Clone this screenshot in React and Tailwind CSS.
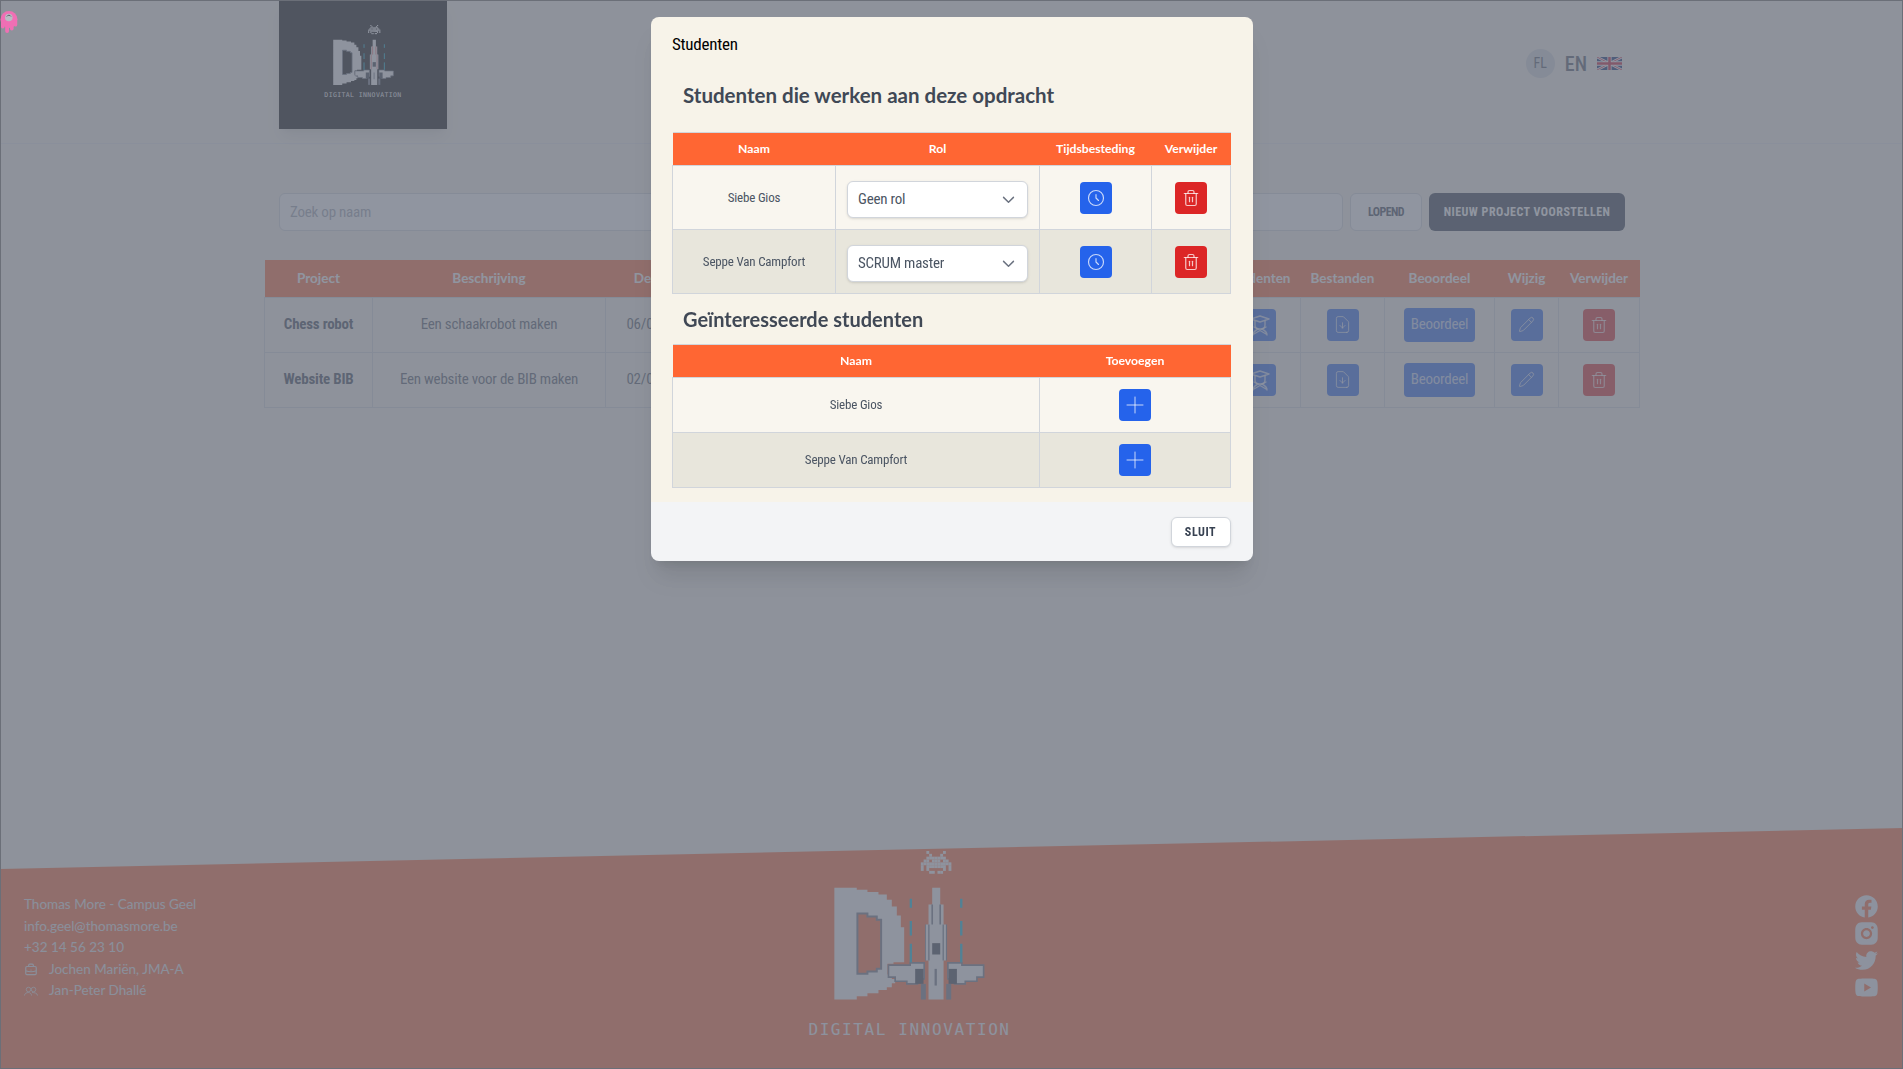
import React from "react";
import { HiOutlineClock, HiOutlinePlus, HiOutlineDocumentDownload, HiOutlineBriefcase, HiOutlineChevronDown } from "react-icons/hi";
import { Pencil, Trash2 } from "lucide-react";
import { RiFacebookCircleFill, RiInstagramFill, RiTwitterFill, RiYoutubeFill } from "react-icons/ri";

const INV = ["..X.....X..", "...X...X...", "..XXXXXXX..", ".XX.XXX.XX.", "XXXXXXXXXXX", "X.XXXXXXX.X", "X.X.....X.X", "...XX.XX..."];

function Wing({ accent }) {
  return (
    <g>
      <path d="M325 404H390V397H432V445H412V460H380V452H345V440H325Z" fill="#f8f8f8" stroke="#6b7280" strokeWidth="5" />
      <rect x="405" y="415" width="25" height="45" fill="#333844" />
      <rect x="422" y="460" width="15" height="47" fill="#6b7280" />
      <path d="M392 205V232M392 272V315M392 340V395" stroke="#00b4d8" strokeWidth="7" fill="none" />
      <path d="M437 282V390" stroke="#6b7280" strokeWidth="5" />
      <path d="M456 222V282" stroke={accent} strokeWidth="5" />
    </g>
  );
}

function Logo({ width, accent, text }) {
  return (
    <div className="flex flex-col items-center" style={{ width }}>
      <svg viewBox="87 62 602 445" className="block w-full">
        {INV.map((row, y) => row.split("").map((c, x) => c === "X" ? <rect key={x + "-" + y} x={422 + x * 8.3} y={62 + y * 8.5} width="8.4" height="8.6" fill="#f8f8f8" /> : null))}
        <path fillRule="evenodd" fill="#f8f8f8" d="M163 172H230V178H262V185H295V192H320V208H335V228H350V255H362V290H372V395H340V400H322V432H335V445H345V458H335V470H320V478H295V488H262V497H230V507H163ZM232 249V430H262V423H290V415H303V268H290V258H262V249Z" />
        <path d="M232 249V430H262V423H290V415H303V268H290V258H262V249Z" fill="none" stroke="#6b7280" strokeWidth="6" />
        <Wing accent={accent} />
        <g transform="matrix(-1 0 0 1 935 0)"><Wing accent={accent} /></g>
        <path d="M456 172H480V222H490V282H497V390H490V507H445V390H437V282H445V222H456Z" fill="#f8f8f8" />
        <path d="M456 222V282M480 222V282" stroke={accent} strokeWidth="5" />
        <path d="M446 282V390M489 282V390" stroke={accent} strokeWidth="4" />
        <rect x="456" y="338" width="24" height="34" fill="#333844" />
        <rect x="463" y="415" width="7" height="50" fill="#6b7280" />
      </svg>
      <div className={"whitespace-nowrap text-center font-['DejaVu_Sans_Mono',monospace] text-[#f1f3f6] " + text}>DIGITAL INNOVATION</div>
    </div>
  );
}

function UKFlag() {
  return (
    <svg viewBox="0 0 60 30" className="h-[13px] w-[25px]" preserveAspectRatio="none">
      <rect width="60" height="30" fill="#012169" />
      <path d="M0 0L60 30M60 0L0 30" stroke="#fff" strokeWidth="6" />
      <path d="M0 0L60 30M60 0L0 30" stroke="#C8102E" strokeWidth="2" />
      <path d="M30 0V30M0 15H60" stroke="#fff" strokeWidth="10" />
      <path d="M30 0V30M0 15H60" stroke="#C8102E" strokeWidth="6" />
    </svg>
  );
}

function CapPerson(props) {
  return (
    <svg viewBox="0 0 24 24" fill="none" stroke="currentColor" strokeWidth="1.3" strokeLinejoin="round" strokeLinecap="round" {...props}>
      <path d="M3 6L12 3L21 6L12 9Z" />
      <path d="M7 8V12C7 15 9.5 16 12 16C14.5 16 17 15 17 12V8" />
      <path d="M5 22C5 19 8 17 10 16M19 22C19 19 16 17 14 16M6 14L18 21M18 14L6 21" />
    </svg>
  );
}

function TwoPeople(props) {
  return (
    <svg viewBox="0 0 28 20" fill="none" stroke="currentColor" strokeWidth="1.6" {...props}>
      <circle cx="9" cy="7" r="4.5" />
      <circle cx="19" cy="7" r="4.5" />
      <path d="M1 19C1 15 5 13 9 13C12 13 15 15 15 19M16 13C20 13 27 14 27 19" />
    </svg>
  );
}

function IconBtn({ icon: Icon, color, size = "h-5 w-5", stroke = 1.4 }) {
  return (
    <span className={"mx-auto flex h-8 w-8 items-center justify-center rounded " + color}>
      <Icon className={size + " text-white/75"} strokeWidth={stroke} style={{ strokeWidth: stroke }} />
    </span>
  );
}

const condensed = "font-['Roboto',sans-serif] font-stretch-condensed";
const narrow = " tracking-[-0.015em]";
const heading = "font-['Lato',sans-serif]";

function BgRow({ name, desc, date }) {
  const td = "border border-[#d1d5db] text-center align-middle";
  return (
    <tr className="h-[55px]">
      <td className={td + " text-[15px] font-bold text-[#374151]" + narrow}>{name}</td>
      <td className={td + " text-[15px] text-[#4b5563]" + narrow}>{desc}</td>
      <td className={td + " text-[15px] text-[#4b5563]" + narrow}>{date}</td>
      <td className={td}></td>
      <td className={td}><IconBtn icon={CapPerson} color="bg-[#2563eb]" size="h-6 w-6" /></td>
      <td className={td}><IconBtn icon={HiOutlineDocumentDownload} color="bg-[#2563eb]" size="h-[21px] w-[21px]" stroke={1.1} /></td>
      <td className={td}><span className={"mx-auto flex h-[34px] w-[71px] items-center justify-center rounded bg-[#2563eb] text-[15px] text-white/75" + narrow}>Beoordeel</span></td>
      <td className={td}><IconBtn icon={Pencil} color="bg-[#2563eb]" size="h-[17px] w-[17px]" stroke={1.4} /></td>
      <td className={td}><IconBtn icon={Trash2} color="bg-[#dc2626]" size="h-[18px] w-[18px]" stroke={1.5} /></td>
    </tr>
  );
}

function Select({ value }) {
  return (
    <div className={"mx-auto mt-[3px] flex h-[37px] w-[181px] items-center justify-between rounded-md border border-[#d1d5db] bg-white pl-[10px] pr-[10px] text-[15px] text-[#4b5563] shadow-sm" + narrow}>
      <span>{value}</span>
      <HiOutlineChevronDown className="h-[17px] w-[17px] text-[#6b7280]" />
    </div>
  );
}

function StudentRow({ name, role, alt }) {
  const td = "border border-[#d1d5db] text-center align-middle";
  return (
    <tr className={"h-[64px] " + (alt ? "bg-[#e8e6dc]" : "bg-[#f9f6ef]")}>
      <td className={td + " text-[13px] text-[#4b5563]" + narrow}>{name}</td>
      <td className={td}><Select value={role} /></td>
      <td className={td}><IconBtn icon={HiOutlineClock} color="bg-[#2563eb]" /></td>
      <td className={td}><IconBtn icon={Trash2} color="bg-[#dc2626]" size="h-[18px] w-[18px]" stroke={1.6} /></td>
    </tr>
  );
}

function InterestRow({ name, alt }) {
  const td = "border border-[#d1d5db] text-center align-middle";
  return (
    <tr className={"h-[55px] " + (alt ? "bg-[#e8e6dc]" : "bg-[#f9f6ef]")}>
      <td className={td + " text-[13px] text-[#4b5563]" + narrow}>{name}</td>
      <td className={td}><IconBtn icon={HiOutlinePlus} color="bg-[#2563eb]" size="h-6 w-6" stroke={1} /></td>
    </tr>
  );
}

export default function App() {
  const thBg = heading + " bg-[#ff6633] text-[13.5px] font-bold text-white text-center";
  const thM = heading + " bg-[#ff6633] text-[12.2px] font-bold text-white text-center border-y border-[#d1d5db]";
  return (
    <div className={"relative flex h-[1069px] w-full flex-col overflow-hidden bg-[#f7f3e9] " + condensed}>
      <header className="flex h-[144px] shrink-0 items-start border-b border-[#e5e7eb] pl-[279px] pr-[281px]">
        <div className="flex h-[129px] w-[168px] flex-col items-center bg-black pt-[25px] shadow-lg">
          <Logo width="81px" accent="#ef4444" text="text-[6.5px] tracking-[0.38px] mt-[6px]" />
        </div>
        <div className="ml-auto mt-[48px] flex items-center">
          <span className="flex h-[29px] w-[29px] items-center justify-center rounded-full bg-[#d1d5db] text-[14px] text-[#4b5563]">FL</span>
          <span className="ml-[10px] mt-[1px] text-[20px] font-medium text-[#4b5563]">EN</span>
          <span className="ml-[10px]"><UKFlag /></span>
        </div>
      </header>

      <main className="flex-1">
        <div className="ml-[279px] mt-[49px] flex h-[38px] w-[1346px] gap-[7px]">
          <div className={"flex flex-1 items-center rounded-md border border-[#d1d5db] bg-white pl-[10px] pt-[1px] text-[15px] text-[#9ca3af]" + narrow}>Zoek op naam</div>
          <div className="flex w-[72px] items-center justify-center rounded-md border border-[#d1d5db] bg-white text-[12px] font-bold tracking-[-0.6px] text-[#374151]">LOPEND</div>
          <div className="flex w-[196px] items-center justify-center rounded-md bg-[#2d3748] text-[12px] font-bold tracking-[0.48px] text-white">NIEUW PROJECT VOORSTELLEN</div>
        </div>
        <table className="ml-[264px] mt-[29px] w-[1375px] table-fixed border-collapse">
          <colgroup>
            <col className="w-[108px]" /><col className="w-[233px]" /><col className="w-[110px]" /><col className="w-[503px]" /><col className="w-[82px]" /><col className="w-[84px]" /><col className="w-[110px]" /><col className="w-[64px]" /><col className="w-[81px]" />
          </colgroup>
          <thead>
            <tr className="h-[37px]">
              {["Project", "Beschrijving", "Deadline", "", "Studenten", "Bestanden", "Beoordeel", "Wijzig", "Verwijder"].map((h, i) => <th key={i} className={thBg}>{h}</th>)}
            </tr>
          </thead>
          <tbody>
            <BgRow name="Chess robot" desc="Een schaakrobot maken" date="06/05/2021" />
            <BgRow name="Website BIB" desc="Een website voor de BIB maken" date="02/05/2021" />
          </tbody>
        </table>
      </main>

      <footer className="flex h-[241px] shrink-0 bg-[#ff6633] [clip-path:polygon(0_17%,100%_0,100%_100%,0_100%)]">
        <div className={heading + " w-[809px] pl-[24px] pt-[66px] text-[13.5px] leading-[21.6px] text-[#e5e7eb]"}>
          <div>Thomas More - Campus Geel</div>
          <div>info.geel@thomasmore.be</div>
          <div>+32 14 56 23 10</div>
          <div className="flex items-center gap-[11px]"><HiOutlineBriefcase className="h-[14px] w-[14px]" />Jochen Mariën, JMA-A</div>
          <div className="flex items-center gap-[11px]"><TwoPeople className="h-[14px] w-[14px]" />Jan-Peter Dhallé</div>
        </div>
        <div className="pt-[23px]">
          <Logo width="201px" accent="#6b7280" text="text-[16px] tracking-[1.6px] mt-[18px]" />
        </div>
        <div className="ml-auto flex flex-col items-center pr-[23px] pt-[65px] text-[#f1f3f6]">
          <RiFacebookCircleFill className="h-[27px] w-[27px]" />
          <RiInstagramFill className="h-[27px] w-[27px]" />
          <RiTwitterFill className="h-[27px] w-[27px]" />
          <RiYoutubeFill className="h-[27px] w-[27px]" />
        </div>
      </footer>

      <div className="fixed inset-0 flex items-start justify-center border border-[#6b6f78] bg-[#6b7280]/75 pt-[16px]">
        <div className="w-[602px] overflow-hidden rounded-lg shadow-xl">
          <div className="h-[485px] bg-[#f7f3e9] px-[21.5px] pt-[16px]">
            <div className={"text-[17px] leading-[22px] text-black" + narrow}>Studenten</div>
            <h3 className={heading + " mt-[25px] pl-[11px] text-[20.5px] font-bold leading-[30px] text-[#404855]"}>Studenten die werken aan deze opdracht</h3>
            <table className="mt-[22px] w-[558px] table-fixed border-collapse">
              <colgroup><col className="w-[163px]" /><col className="w-[204px]" /><col className="w-[112px]" /><col className="w-[79px]" /></colgroup>
              <thead><tr className="h-[33px]">{["Naam", "Rol", "Tijdsbesteding", "Verwijder"].map(h => <th key={h} className={thM}>{h}</th>)}</tr></thead>
              <tbody>
                <StudentRow name="Siebe Gios" role="Geen rol" />
                <StudentRow name="Seppe Van Campfort" role="SCRUM master" alt />
              </tbody>
            </table>
            <h3 className={heading + " mt-[10px] pl-[11px] text-[20px] font-bold leading-[30px] text-[#404855]"}>Geïnteresseerde studenten</h3>
            <table className="mt-[10px] w-[558px] table-fixed border-collapse">
              <colgroup><col className="w-[367px]" /><col className="w-[191px]" /></colgroup>
              <thead><tr className="h-[33px]">{["Naam", "Toevoegen"].map(h => <th key={h} className={thM}>{h}</th>)}</tr></thead>
              <tbody>
                <InterestRow name="Siebe Gios" />
                <InterestRow name="Seppe Van Campfort" alt />
              </tbody>
            </table>
          </div>
          <div className="flex h-[59px] items-center justify-end bg-[#f3f4f6] pr-[22px]">
            <span className="flex h-[30px] w-[60px] items-center justify-center rounded-md border border-[#d1d5db] bg-white text-[12px] font-bold tracking-[0.55px] text-[#374151] shadow-sm">SLUIT</span>
          </div>
        </div>
      </div>

      <svg viewBox="0 0 18 22" className="fixed left-0 top-[11px] h-[22px] w-[18px]">
        <circle cx="9" cy="8.5" r="8.5" fill="#f06fb4" />
        <rect x="1" y="9" width="3.6" height="8.5" rx="1.8" fill="#f06fb4" />
        <rect x="5.2" y="9" width="3.8" height="13" rx="1.9" fill="#f06fb4" />
        <rect x="10" y="9" width="3.6" height="10.5" rx="1.8" fill="#f06fb4" />
        <rect x="14" y="9" width="3.2" height="6.5" rx="1.6" fill="#f06fb4" />
        <circle cx="8.8" cy="6.5" r="3.8" fill="#b9bcc4" />
        <path d="M6.8 5.5A2.4 2.4 0 0 1 11 5.5" fill="none" stroke="#5b5f69" strokeWidth="1" />
      </svg>
    </div>
  );
}
